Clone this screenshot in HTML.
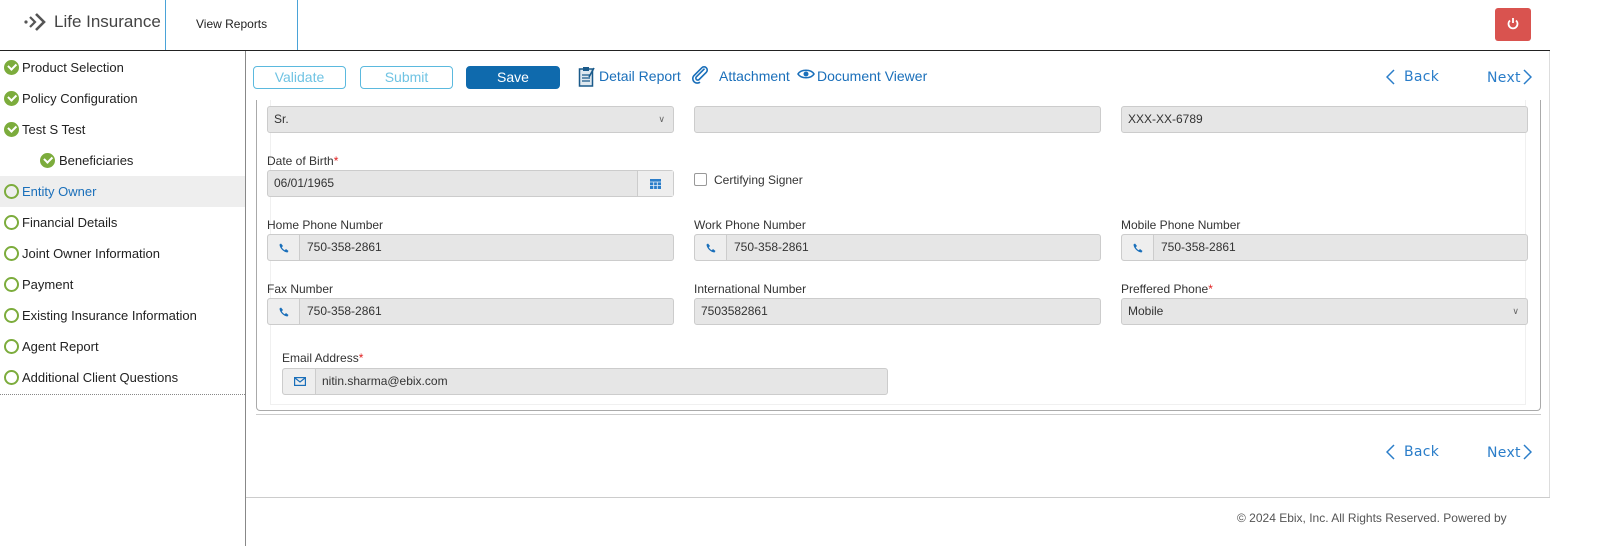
<!DOCTYPE html>
<html><head><meta charset="utf-8"><style>
*{box-sizing:border-box;margin:0;padding:0}
body{width:1600px;height:546px;background:#fff;font-family:"Liberation Sans",sans-serif;font-size:13px;color:#333;position:relative;overflow:hidden}
.a{position:absolute}
.side{font-size:13px;color:#222}
.si{position:absolute;left:0;width:245px;height:31px;line-height:31px;padding-left:22px}
.ck{position:absolute;left:4px;top:8px;width:15px;height:15px;border-radius:50%;background:#7cac3c}
.ck:after{content:"";position:absolute;left:4px;top:3px;width:6px;height:3.5px;border-left:2px solid #fff;border-bottom:2px solid #fff;transform:rotate(-45deg)}
.ci{position:absolute;left:4px;top:8px;width:15px;height:15px;border-radius:50%;border:2px solid #7cac3c}
.lbl{position:absolute;font-size:12px;color:#333}
.req{color:#e02020}
.inp{position:absolute;height:27px;background:#e6e6e6;border:1px solid #ccc;border-radius:3px;font-size:12px;color:#333;line-height:25px;padding-left:6px}
.ad{position:absolute;left:0;top:0;width:32px;height:25px;border-right:1px solid #ccc;background:#eee;border-radius:3px 0 0 3px}
.btn{position:absolute;top:66px;height:23px;border:1px solid #5bb9de;border-radius:4px;color:#6fc3e3;text-align:center;line-height:21px;font-size:14px}
.lnk{position:absolute;color:#1a6fba;font-size:14px}
.nav{position:absolute;color:#2a7dc9;font-size:14px;font-family:"DejaVu Sans",sans-serif;letter-spacing:.3px}
.ph{position:absolute;left:11px;top:8px}
</style></head><body>
<svg class="a" style="left:24px;top:12px" width="24" height="20" viewBox="0 0 24 20"><circle cx="2" cy="10" r="1.6" fill="#555"/><path d="M6 5l5 5-5 5" stroke="#555" stroke-width="2.2" fill="none"/><path d="M12 2l8 8-8 8" stroke="#555" stroke-width="2.6" fill="none"/></svg>
<div class="a" style="left:54px;top:12px;font-size:17px;color:#444">Life Insurance</div>
<div class="a" style="left:165px;top:0;width:1px;height:50px;background:#4aa3d8"></div>
<div class="a" style="left:196px;top:17px;font-size:12px;color:#222">View Reports</div>
<div class="a" style="left:297px;top:0;width:1px;height:50px;background:#4aa3d8"></div>
<div class="a" style="left:1495px;top:8px;width:36px;height:33px;background:#d9534f;border-radius:3px"></div>
<svg class="a" style="left:1506px;top:17px" width="14" height="14" viewBox="0 0 14 14"><path d="M4 3.5A4.5 4.5 0 1 0 10 3.5" stroke="#fff" stroke-width="1.8" fill="none"/><path d="M7 1v5" stroke="#fff" stroke-width="1.8"/></svg>
<div class="a" style="left:0;top:50px;width:1550px;height:1px;background:#222"></div>
<div class="a" style="left:245px;top:51px;width:1px;height:495px;background:#888"></div>
<div class="side">
<div class="si" style="top:52px"><span class="ck"></span>Product Selection</div>
<div class="si" style="top:83px"><span class="ck"></span>Policy Configuration</div>
<div class="si" style="top:114px"><span class="ck"></span>Test S Test</div>
<div class="si" style="top:145px;padding-left:59px"><span class="ck" style="left:40px"></span>Beneficiaries</div>
<div class="si" style="top:176px;background:#eee;color:#1a6fba"><span class="ci"></span>Entity Owner</div>
<div class="si" style="top:207px"><span class="ci"></span>Financial Details</div>
<div class="si" style="top:238px"><span class="ci"></span>Joint Owner Information</div>
<div class="si" style="top:269px"><span class="ci"></span>Payment</div>
<div class="si" style="top:300px"><span class="ci"></span>Existing Insurance Information</div>
<div class="si" style="top:331px"><span class="ci"></span>Agent Report</div>
<div class="si" style="top:362px"><span class="ci"></span>Additional Client Questions</div>
</div>
<div class="a" style="left:0;top:394px;width:245px;border-top:1px dotted #888"></div>
<div class="btn" style="left:253px;width:93px">Validate</div>
<div class="btn" style="left:360px;width:93px">Submit</div>
<div class="btn" style="left:466px;width:94px;background:#0f6aad;border-color:#0f6aad;color:#fff">Save</div>
<svg class="a" style="left:578px;top:66px" width="18" height="22" viewBox="0 0 18 22"><rect x="1.5" y="3" width="13" height="17" fill="#dfe8ef" stroke="#1a5a8a" stroke-width="1.5"/><rect x="5" y="1" width="6" height="4" fill="#1a5a8a"/><path d="M4 9h8M4 12h8M4 15h8" stroke="#1a5a8a" stroke-width="1.2"/><path d="M16 2l-5 9" stroke="#1a5a8a" stroke-width="1.6"/></svg>
<div class="lnk" style="left:599px;top:68px">Detail Report</div>
<svg class="a" style="left:691px;top:66px" width="20" height="18" viewBox="0 0 20 18"><path d="M15 3L6 12a2 2 0 0 0 3 3l8-8a3.5 3.5 0 0 0-5-5L3 11a5 5 0 0 0 7 7" stroke="#1a6fba" stroke-width="1.8" fill="none" transform="scale(.9)"/></svg>
<div class="lnk" style="left:719px;top:68px">Attachment</div>
<svg class="a" style="left:797px;top:68px" width="18" height="12" viewBox="0 0 18 12"><path d="M1 6C4 1 14 1 17 6C14 11 4 11 1 6z" stroke="#1a6fba" stroke-width="1.6" fill="none"/><circle cx="9" cy="6" r="2.5" fill="#1a6fba"/></svg>
<div class="lnk" style="left:817px;top:68px">Document Viewer</div>
<svg class="a" style="left:1386px;top:69px" width="9" height="16" viewBox="0 0 9 16"><path d="M8 1L1 8l7 7" stroke="#2a7dc9" stroke-width="1.5" fill="none"/></svg>
<div class="nav" style="left:1404px;top:69px">Back</div>
<div class="nav" style="left:1487px;top:70px">Next</div>
<svg class="a" style="left:1523px;top:69px" width="9" height="16" viewBox="0 0 9 16"><path d="M1 1l7 7-7 7" stroke="#2a7dc9" stroke-width="1.5" fill="none"/></svg>
<div class="a" style="left:256px;top:100px;width:1285px;height:311px;border:1px solid #aaa;border-top:none;border-radius:0 0 4px 4px"></div>
<div class="a" style="left:270px;top:100px;width:1256px;height:305px;border:1px solid #f0f0f0;border-top:none"></div>
<div class="a" style="left:256px;top:414px;width:1285px;height:1px;background:#ccc"></div>
<div class="inp" style="left:267px;top:106px;width:407px;height:27px">Sr.<span style="position:absolute;right:8px;top:0;font-size:9px;color:#666">&#x2228;</span></div>
<div class="inp" style="left:694px;top:106px;width:407px"></div>
<div class="inp" style="left:1121px;top:106px;width:407px">XXX-XX-6789</div>
<div class="lbl" style="left:267px;top:154px">Date of Birth<span class="req">*</span></div>
<div class="inp" style="left:267px;top:170px;width:407px">06/01/1965<span style="position:absolute;right:0;top:0;width:36px;height:25px;border-left:1px solid #ccc;background:#eee"><svg style="position:absolute;left:12px;top:7px" width="11" height="11" viewBox="0 0 11 11"><rect x="0" y="1" width="11" height="10" fill="#2a7dc9"/><path d="M0 4h11M3.7 4v7M7.3 4v7M0 7.5h11" stroke="#e8f0f8" stroke-width=".8"/></svg></span></div>
<div class="a" style="left:694px;top:173px;width:13px;height:13px;border:1px solid #999;border-radius:2px"></div>
<div class="lbl" style="left:714px;top:173px">Certifying Signer</div>
<div class="lbl" style="left:267px;top:218px">Home Phone Number</div>
<div class="lbl" style="left:694px;top:218px">Work Phone Number</div>
<div class="lbl" style="left:1121px;top:218px">Mobile Phone Number</div>
<div class="inp" style="left:267px;top:234px;width:407px;padding-left:39px"><span class="ad"><svg class="ph" width="10" height="10" viewBox="0 0 10 10"><path d="M2 0.5l2 2.5-1.2 1.2c.6 1.3 1.6 2.3 3 3L7 6l2.5 2-1 1.5C5 9.5 0.5 5 0.5 1.5z" fill="#1a6fba"/></svg></span>750-358-2861</div>
<div class="inp" style="left:694px;top:234px;width:407px;padding-left:39px"><span class="ad"><svg class="ph" width="10" height="10" viewBox="0 0 10 10"><path d="M2 0.5l2 2.5-1.2 1.2c.6 1.3 1.6 2.3 3 3L7 6l2.5 2-1 1.5C5 9.5 0.5 5 0.5 1.5z" fill="#1a6fba"/></svg></span>750-358-2861</div>
<div class="inp" style="left:1121px;top:234px;width:407px;padding-left:39px"><span class="ad"><svg class="ph" width="10" height="10" viewBox="0 0 10 10"><path d="M2 0.5l2 2.5-1.2 1.2c.6 1.3 1.6 2.3 3 3L7 6l2.5 2-1 1.5C5 9.5 0.5 5 0.5 1.5z" fill="#1a6fba"/></svg></span>750-358-2861</div>
<div class="lbl" style="left:267px;top:282px">Fax Number</div>
<div class="lbl" style="left:694px;top:282px">International Number</div>
<div class="lbl" style="left:1121px;top:282px">Preffered Phone<span class="req">*</span></div>
<div class="inp" style="left:267px;top:298px;width:407px;padding-left:39px"><span class="ad"><svg class="ph" width="10" height="10" viewBox="0 0 10 10"><path d="M2 0.5l2 2.5-1.2 1.2c.6 1.3 1.6 2.3 3 3L7 6l2.5 2-1 1.5C5 9.5 0.5 5 0.5 1.5z" fill="#1a6fba"/></svg></span>750-358-2861</div>
<div class="inp" style="left:694px;top:298px;width:407px">7503582861</div>
<div class="inp" style="left:1121px;top:298px;width:407px">Mobile<span style="position:absolute;right:8px;top:0;font-size:9px;color:#666">&#x2228;</span></div>
<div class="lbl" style="left:282px;top:351px">Email Address<span class="req">*</span></div>
<div class="inp" style="left:282px;top:368px;width:606px;padding-left:39px"><span class="ad" style="width:33px"><svg style="position:absolute;left:11px;top:8px" width="12" height="9" viewBox="0 0 12 9"><rect x=".6" y=".6" width="10.8" height="7.8" fill="none" stroke="#1a6fba" stroke-width="1.2"/><path d="M1 1l5 4 5-4" fill="none" stroke="#1a6fba" stroke-width="1.2"/></svg></span>nitin.sharma@ebix.com</div>
<svg class="a" style="left:1386px;top:444px" width="9" height="16" viewBox="0 0 9 16"><path d="M8 1L1 8l7 7" stroke="#2a7dc9" stroke-width="1.5" fill="none"/></svg>
<div class="nav" style="left:1404px;top:444px">Back</div>
<div class="nav" style="left:1487px;top:445px">Next</div>
<svg class="a" style="left:1523px;top:444px" width="9" height="16" viewBox="0 0 9 16"><path d="M1 1l7 7-7 7" stroke="#2a7dc9" stroke-width="1.5" fill="none"/></svg>
<div class="a" style="left:1549px;top:51px;width:1px;height:447px;background:#ddd"></div>
<div class="a" style="left:246px;top:497px;width:1304px;height:1px;background:#ccc"></div>
<div class="a" style="left:1237px;top:511px;font-size:12px;color:#555">© 2024 Ebix, Inc. All Rights Reserved. Powered by</div>
</body></html>
